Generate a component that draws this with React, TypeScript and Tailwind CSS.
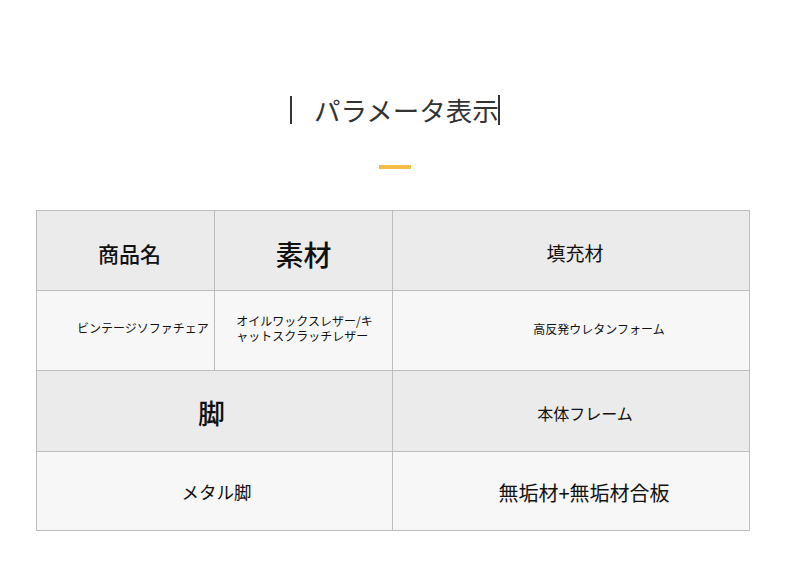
const jp = { fontFamily: '"Noto Sans CJK JP", "Noto Sans", sans-serif' };

function Cell({ children, className = '' }: { children: React.ReactNode; className?: string }) {
  return (
    <div className={`flex items-center justify-center text-[#111] ${className}`}>{children}</div>
  );
}

function App() {
  return (
    <div className="w-[790px] h-[573px] bg-white overflow-hidden" style={jp}>
      {/* title */}
      <div className="pt-[95px] pl-[290px] flex">
        <div className="flex items-center h-[30px]">
          <span className="w-[2px] h-[28px] bg-[#333]" />
          <span className="ml-[22px] text-[26.5px] leading-[30px] text-[#333]">パラメータ表示</span>
          <span className="-ml-[1px] w-[2px] h-[30px] bg-[#333]" />
        </div>
      </div>
      <div className="mt-[40px] flex justify-center">
        <div className="w-[32px] h-[4px] bg-[#f5bd45]" />
      </div>

      {/* spec table */}
      <div className="ml-[36px] mt-[41px] w-[714px] grid grid-cols-[177px_177px_356px] grid-rows-[79px_79px_80px_78px] gap-px p-px bg-[#bdbdbd]">
        <Cell className="bg-[#ebebeb] text-[21px] font-medium pl-[8px] pt-[6px]">商品名</Cell>
        <Cell className="bg-[#ebebeb] text-[28px] font-medium pt-[6px]">素材</Cell>
        <Cell className="bg-[#ebebeb] text-[19px] pl-[8px] pt-[6px]">填充材</Cell>

        <Cell className="bg-[#f7f7f7] text-[12px] pl-[35px] pb-[5px]">ビンテージソファチェア</Cell>
        <Cell className="bg-[#f7f7f7] text-[12px] leading-[15px] pl-[2px] pb-[6px]">
          <div className="flex flex-col items-start">
            <div>オイルワックスレザー/キ</div>
            <div>ャットスクラッチレザー</div>
          </div>
        </Cell>
        <Cell className="bg-[#f7f7f7] text-[12px] pl-[56px] pb-[4px]">高反発ウレタンフォーム</Cell>

        <Cell className="col-span-2 bg-[#ebebeb] text-[27px] font-medium pr-[6px] pt-[4px]">脚</Cell>
        <Cell className="bg-[#ebebeb] text-[16px] pl-[28px] pt-[4px]">本体フレーム</Cell>

        <Cell className="col-span-2 bg-[#f7f7f7] text-[17.5px] pl-[4px] pt-[3px]">メタル脚</Cell>
        <Cell className="bg-[#f7f7f7] text-[20px] pl-[26px] pt-[3px]">無垢材+無垢材合板</Cell>
      </div>
    </div>
  );
}

export default App;
